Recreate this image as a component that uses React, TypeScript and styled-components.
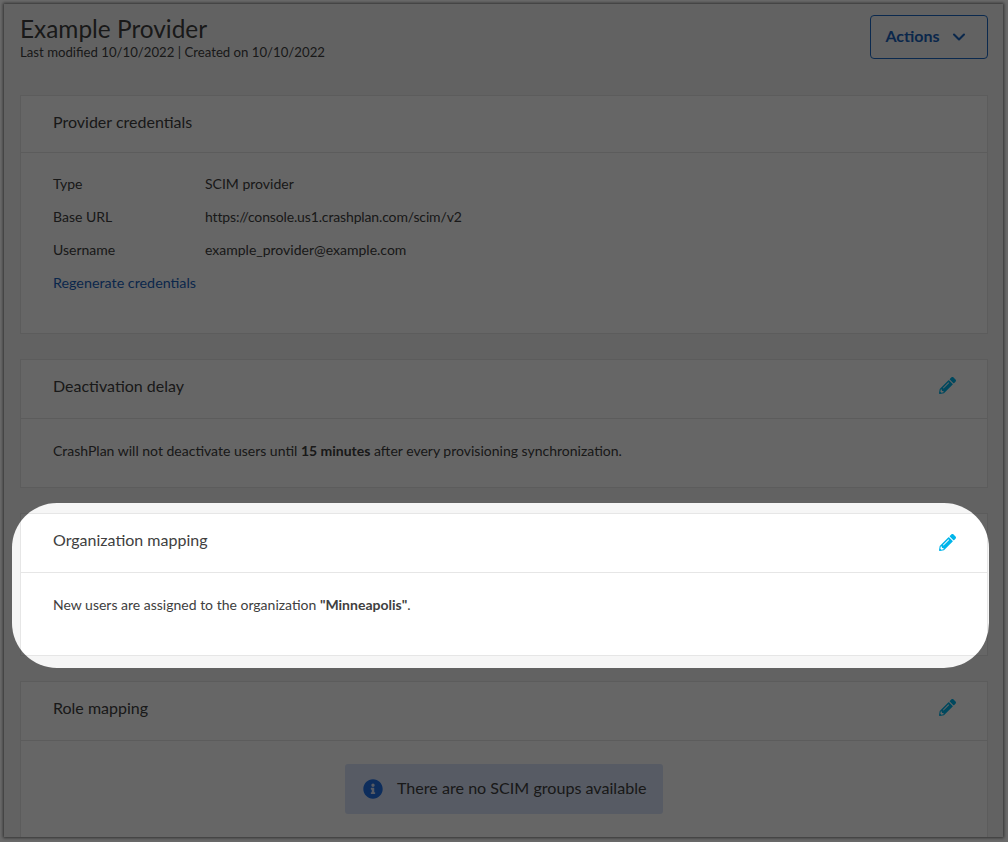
import { FaInfoCircle, FaPencilAlt } from 'react-icons/fa';
import { FiChevronDown } from 'react-icons/fi';
import styled, { createGlobalStyle } from 'styled-components';

const GlobalStyle = createGlobalStyle`
	html, body {
		margin: 0;
		height: 100%;
		background-color: #6a6a6a;
	}

	body {
		font-family: 'Lato', 'Liberation Sans', sans-serif;
		color: #404040;
	}
`;

const Frame = styled.div`
	position: relative;
	box-sizing: border-box;
	width: 999px;
	height: 833px;
	margin: 4px 0 0 4px;
	padding: 11px 15px 0 16px;
	overflow: hidden;
	background-color: #f6f6f6;
	display: flex;
	flex-direction: column;
`;

const FrameShadow = styled.div`
	width: 999px;
	height: 833px;
	box-shadow: 0 0 3px 1px rgba(0, 0, 0, 0.55);
	position: absolute;
	top: 4px;
	left: 4px;
	z-index: 3;
	pointer-events: none;
`;

const Header = styled.div`
	display: flex;
	flex-shrink: 0;
	justify-content: space-between;
	align-items: flex-start;
	height: 80px;
`;

const TitleBlock = styled.div`
	display: flex;
	flex-direction: column;
`;

const Title = styled.h1`
	margin: 0;
	font-size: 24.4px;
	line-height: 28px;
	font-weight: 400;
`;

const Meta = styled.div`
	font-size: 13.2px;
	line-height: 16px;
	margin-top: 1px;
`;

const ActionsButton = styled.button`
	box-sizing: border-box;
	width: 118px;
	height: 44px;
	display: flex;
	align-items: center;
	justify-content: center;
	gap: 9px;
	background-color: transparent;
	border: 1px solid #1c68c4;
	border-radius: 4px;
	color: #1a62bc;
	font-family: inherit;
	font-size: 16px;
	font-weight: 700;
	padding: 0 4px 3px 0;

	svg {
		margin-top: 3px;
	}
`;

const Card = styled.section<{ $height: number }>`
	position: relative;
	flex-shrink: 0;
	background-color: #fff;
	border: 1px solid #e6e6e6;
	margin-bottom: 25px;
	height: ${p => p.$height}px;
	box-sizing: border-box;
`;

const CardHeader = styled.div<{ $height: number }>`
	box-sizing: border-box;
	height: ${p => p.$height}px;
	padding: 17px 31px 0 32px;
	border-bottom: 1px solid #e6e6e6;
	display: flex;
	align-items: flex-start;
	justify-content: space-between;
	font-size: 16px;
	line-height: 18px;
	color: #404040;
`;

const EditIcon = styled(FaPencilAlt)<{ $drop?: number }>`
	color: #00b5ea;
	font-size: 17px;
	margin-top: ${p => p.$drop || 0}px;
`;

const CardBody = styled.div`
	padding: 0 32px;
	font-size: 14px;
	color: #404040;
`;

const Sentence = styled.p`
	margin: 0;
	padding-top: 23px;
	line-height: 18px;
`;

const Details = styled.div`
	display: grid;
	grid-template-columns: 152px 1fr;
	grid-auto-rows: 33px;
	align-items: center;
	padding-top: 14px;
`;

const Url = styled.span`
	letter-spacing: -0.14px;
`;

const Link = styled.a`
	grid-column: 1 / span 2;
	font-size: 14.3px;
	color: #1a62bc;
`;

const InfoBanner = styled.div`
	box-sizing: border-box;
	width: 318px;
	height: 50px;
	margin: 23px auto 0;
	border-radius: 3px;
	background-color: #d9e4fa;
	display: flex;
	align-items: center;
	gap: 14px;
	padding-left: 18px;
	font-size: 16.1px;
	color: #404040;

	svg {
		color: #2272e6;
		font-size: 20px;
	}
`;

const BannerText = styled.span`
	padding-bottom: 3px;
`;

const Spotlight = styled.div`
	position: absolute;
	top: -11px;
	bottom: -13px;
	left: -9px;
	right: -2px;
	border-radius: 45px;
	box-shadow: 0 0 0 1200px rgba(0, 0, 0, 0.6);
	pointer-events: none;
	z-index: 2;
`;

export default function App() {
	return (
		<>
			<GlobalStyle />
			<Frame>
				<Header>
					<TitleBlock>
						<Title>Example Provider</Title>
						<Meta>Last modified 10/10/2022 | Created on 10/10/2022</Meta>
					</TitleBlock>
					<ActionsButton type='button'>
						Actions
						<FiChevronDown size={20} strokeWidth={2.5} />
					</ActionsButton>
				</Header>

				<Card $height={239}>
					<CardHeader $height={57}>Provider credentials</CardHeader>
					<CardBody>
						<Details>
							<span>Type</span>
							<span>SCIM provider</span>
							<span>Base URL</span>
							<Url>https://console.us1.crashplan.com/scim/v2</Url>
							<span>Username</span>
							<span>example_provider@example.com</span>
							<Link>Regenerate credentials</Link>
						</Details>
					</CardBody>
				</Card>

				<Card $height={129}>
					<CardHeader $height={59}>
						Deactivation delay
						<EditIcon />
					</CardHeader>
					<CardBody>
						<Sentence>
							CrashPlan will not deactivate users until <b>15 minutes</b> after every provisioning synchronization.
						</Sentence>
					</CardBody>
				</Card>

				<Card $height={143}>
					<CardHeader $height={59}>
						Organization mapping
						<EditIcon $drop={3} />
					</CardHeader>
					<CardBody>
						<Sentence>
							New users are assigned to the organization <b>"Minneapolis"</b>.
						</Sentence>
					</CardBody>
					<Spotlight />
				</Card>

				<Card $height={200}>
					<CardHeader $height={59}>
						Role mapping
						<EditIcon />
					</CardHeader>
					<InfoBanner>
						<FaInfoCircle />
						<BannerText>There are no SCIM groups available</BannerText>
					</InfoBanner>
				</Card>
			</Frame>
			<FrameShadow />
		</>
	);
}
